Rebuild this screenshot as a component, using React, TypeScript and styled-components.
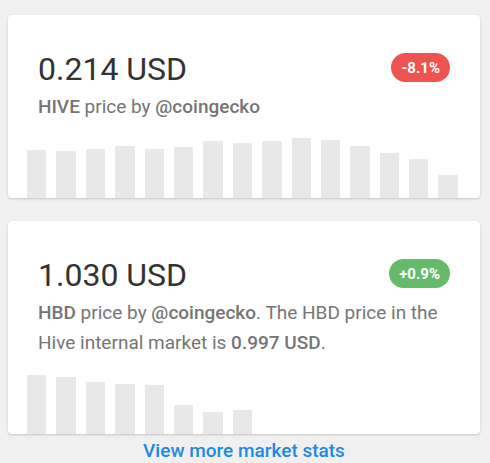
import React from 'react';
import styled, { createGlobalStyle } from 'styled-components';

const GlobalStyle = createGlobalStyle`
    html, body {
        margin: 0;
        padding: 0;
        background: #f0f0f0;
        font-family: Roboto, 'Liberation Sans', sans-serif;
    }
`;

const Page = styled.div`
    padding: 15px 10px 0 8px;
    display: flex;
    flex-direction: column;
    gap: 23px;
`;

const Card = styled.div`
    background: #fff;
    border-radius: 4px;
    box-shadow: 0 1px 3px rgb(0 0 0 / 12%), 0 1px 2px rgb(0 0 0 / 6%);
    padding-top: 35px;
    overflow: hidden;
`;

const Header = styled.div`
    display: flex;
    justify-content: space-between;
    align-items: flex-start;
    padding: 0 30px;
`;

const Price = styled.div`
    font-size: 32px;
    line-height: 38px;
    color: #333;
    font-weight: 400;
`;

const Badge = styled.span<{ $up: boolean }>`
    margin-top: 3px;
    height: 29px;
    padding: 0 10px;
    border-radius: 15px;
    display: flex;
    align-items: center;
    background: ${(p) => (p.$up ? '#66bb6a' : '#ef5350')};
    color: #fff;
    font-size: 15px;
    font-weight: 700;
`;

const Description = styled.p`
    margin: 4px 0 0;
    padding: 0 30px;
    font-size: 19px;
    line-height: 30px;
    color: #757575;

    b {
        font-weight: 500;
    }
`;

const Chart = styled.div`
    margin-top: 16px;
    height: 60px;
    display: flex;
    align-items: flex-end;
    gap: 10px;
    padding-left: 19px;
`;

const Bar = styled.div`
    width: 19.4px;
    background: #e8e8e8;
    flex-shrink: 0;
`;

const MoreLink = styled.a`
    display: block;
    text-align: center;
    margin-top: -17px;
    font-size: 19px;
    line-height: 21px;
    font-weight: 500;
    color: #1e88e5;
    text-decoration: none;
`;

const hiveBars = [48, 47, 49, 52, 49, 51, 57, 55, 57, 60, 58, 52, 45, 39, 23];
const hbdBars = [59, 57, 52, 50, 49, 29, 22, 24];

const App = () => {
    return (
        <>
            <GlobalStyle />
            <Page>
                <Card>
                    <Header>
                        <Price>0.214 USD</Price>
                        <Badge $up={false}>-8.1%</Badge>
                    </Header>
                    <Description>
                        <b>HIVE</b> price by <b>@coingecko</b>
                    </Description>
                    <Chart>
                        {hiveBars.map((h, i) => (
                            <Bar key={i} style={{ height: h }} />
                        ))}
                    </Chart>
                </Card>
                <Card>
                    <Header>
                        <Price>1.030 USD</Price>
                        <Badge $up>+0.9%</Badge>
                    </Header>
                    <Description>
                        <b>HBD</b> price by <b>@coingecko</b>. The HBD price in the Hive
                        internal market is <b>0.997 USD</b>.
                    </Description>
                    <Chart>
                        {hbdBars.map((h, i) => (
                            <Bar key={i} style={{ height: h }} />
                        ))}
                    </Chart>
                </Card>
                <MoreLink href="#">View more market stats</MoreLink>
            </Page>
        </>
    );
};

export default App;
